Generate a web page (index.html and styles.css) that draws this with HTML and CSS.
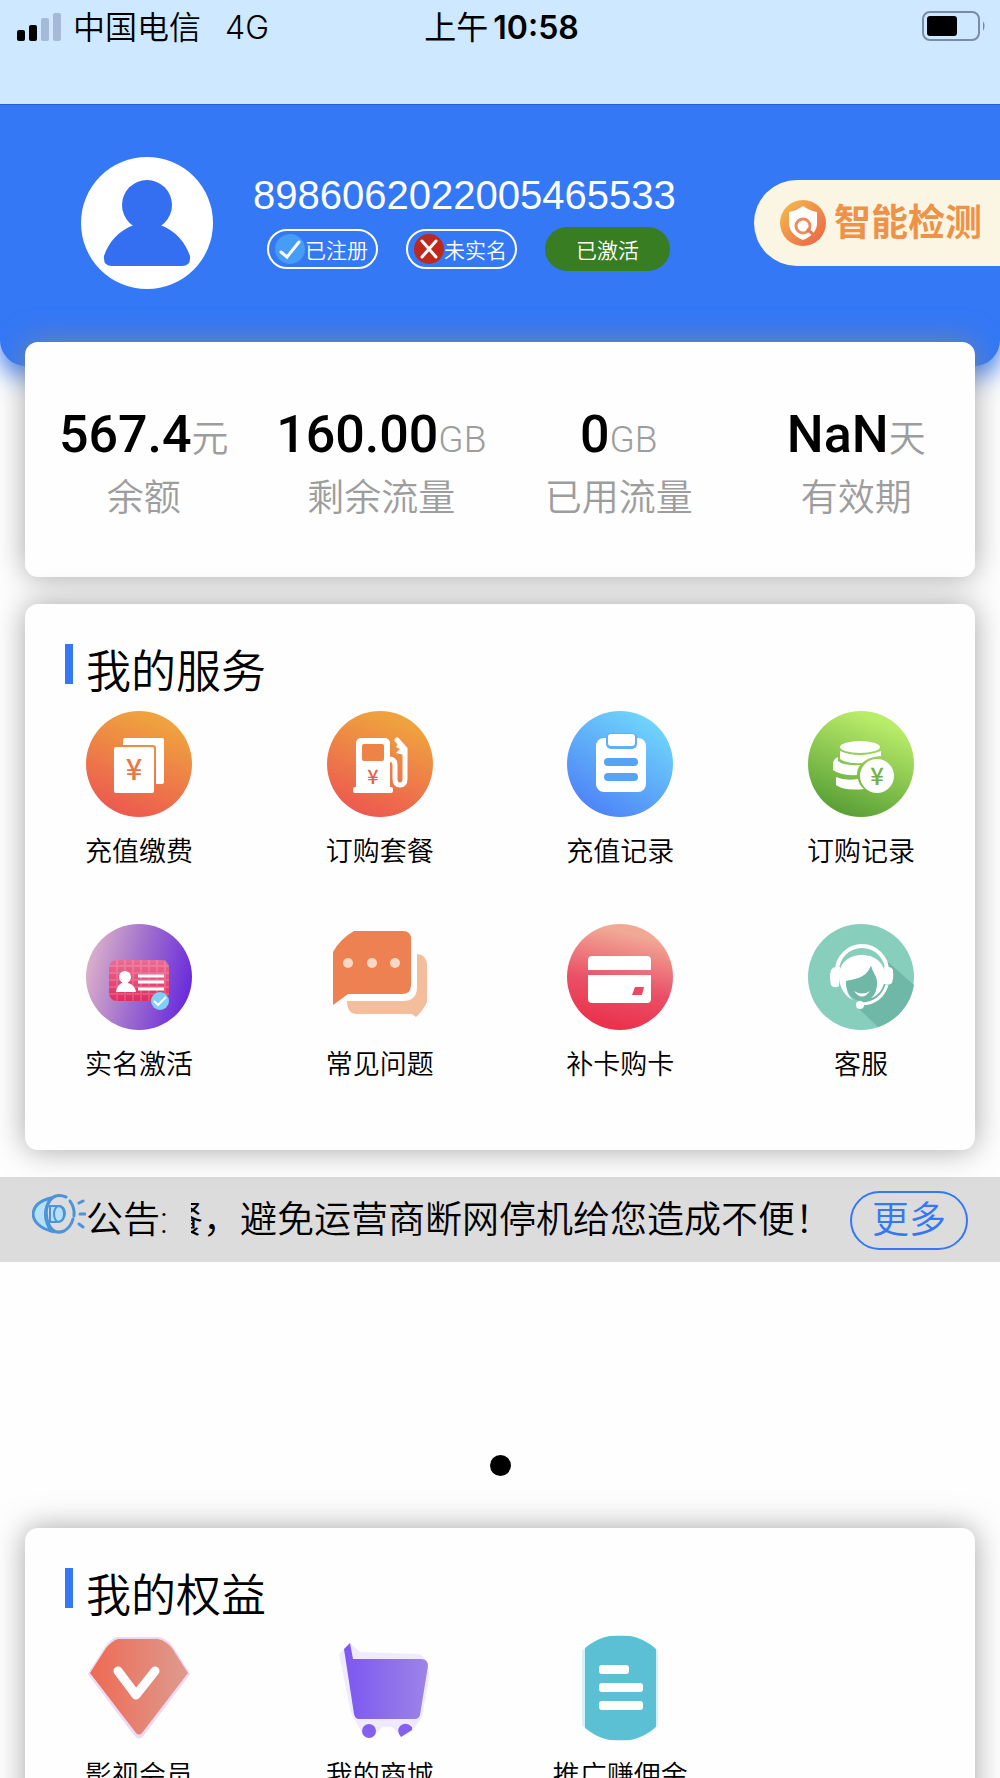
FILE: index.html
```html
<!DOCTYPE html>
<html lang="zh-CN">
<head>
    <meta charset="UTF-8">
    <meta name="viewport" content="width=device-width, initial-scale=1.0">
    <title>我的服务</title>
    <link rel="stylesheet" href="styles.css">
</head>
<body>
    <div class="page">
        <div class="status-bar">
            <div class="status-left">
                <svg class="signal" viewBox="0 0 44 28" aria-hidden="true">
                    <rect x="0" y="17" width="8" height="11" rx="2"/>
                    <rect x="12" y="12" width="8" height="16" rx="2"/>
                    <rect x="24" y="5" width="8" height="23" rx="2" fill="#a5b9d8"/>
                    <rect x="36" y="0" width="8" height="28" rx="2" fill="#a5b9d8"/>
                </svg>
                <span class="carrier">中国电信</span>
                <span class="network">4G</span>
            </div>
            <div class="status-time">上午<b>10:58</b></div>
            <div class="status-right">
                <svg class="battery" viewBox="0 0 64 30" aria-hidden="true">
                    <rect x="1" y="1" width="56" height="28" rx="7" fill="none" stroke="#7a8ba3" stroke-width="2"/>
                    <rect x="5" y="5" width="30" height="20" rx="3"/>
                    <path d="M61 10q3 5 0 10z" fill="#7a8ba3"/>
                </svg>
            </div>
        </div>

        <header class="header">
            <svg class="avatar" viewBox="0 0 132 132" aria-hidden="true">
                <circle cx="66" cy="66" r="66" fill="#fff"/>
                <circle cx="66" cy="48" r="25" fill="#336ff0"/>
                <path d="M53 68Q66 76 79 68C94 73 105 86 109 99Q110 109 101 109H31Q22 109 23 99C27 86 38 73 53 68z" fill="#336ff0"/>
            </svg>
            <div class="account">
                <div class="iccid">8986062022005465533</div>
                <div class="badges">
                    <span class="badge">
                        <svg viewBox="0 0 30 30" aria-hidden="true">
                            <circle cx="15" cy="15" r="15" fill="#469df6"/>
                            <path d="M6 18l6 5L24 8" fill="none" stroke="#fff" stroke-width="3" stroke-linecap="round"/>
                        </svg>已注册
                    </span>
                    <span class="badge">
                        <svg viewBox="0 0 30 30" aria-hidden="true">
                            <circle cx="15" cy="15" r="15" fill="#bf281d"/>
                            <path d="M8 7l14 16M22 7L8 23" fill="none" stroke="#fff" stroke-width="3" stroke-linecap="round"/>
                        </svg>未实名
                    </span>
                    <span class="badge badge-active">已激活</span>
                </div>
            </div>
            <button class="detect" type="button">
                <svg viewBox="0 0 48 48" aria-hidden="true">
                    <defs>
                        <linearGradient id="detect" x1="0" y1="0" x2="1" y2="1">
                            <stop offset="0" stop-color="#f3c04e"/>
                            <stop offset="1" stop-color="#eb5f47"/>
                        </linearGradient>
                    </defs>
                    <circle cx="24" cy="24" r="23" fill="url(#detect)"/>
                    <path d="M24 7Q31 12 38 13V24Q38 35 24 41Q10 35 10 24V13Q17 12 24 7z" fill="#fff"/>
                    <circle cx="24" cy="27" r="7" fill="none" stroke="#ee8a5c" stroke-width="3"/>
                    <path d="M28 30l7 6" stroke="#ee7a55" stroke-width="3"/>
                </svg>
                <span>智能检测</span>
            </button>
        </header>

        <section class="card stats">
            <div class="stat">
                <div class="stat-value">567.4<small>元</small></div>
                <div class="stat-label">余额</div>
            </div>
            <div class="stat">
                <div class="stat-value">160.00<small>GB</small></div>
                <div class="stat-label">剩余流量</div>
            </div>
            <div class="stat">
                <div class="stat-value">0<small>GB</small></div>
                <div class="stat-label">已用流量</div>
            </div>
            <div class="stat">
                <div class="stat-value">NaN<small>天</small></div>
                <div class="stat-label">有效期</div>
            </div>
        </section>

        <section class="card panel">
            <h2>我的服务</h2>
            <nav class="grid">
                <a class="item" href="#recharge">
                    <svg viewBox="0 0 106 106" aria-hidden="true">
                        <defs>
                            <linearGradient id="orange" x1="0.7" y1="0.1" x2="0.35" y2="1">
                                <stop offset="0" stop-color="#efa23f"/>
                                <stop offset="1" stop-color="#ec5850"/>
                            </linearGradient>
                        </defs>
                        <circle cx="53" cy="53" r="53" fill="url(#orange)"/>
                        <path d="M39 27H76Q78 27 78 29V71Q78 73 76 73H70V37Q70 34 67 34H37V29Q37 27 39 27z" fill="#fff"/>
                        <rect x="28" y="36" width="40" height="46" rx="2" fill="#fff"/>
                        <text class="yuan" x="48" y="69" font-size="29" fill="#ec7648">¥</text>
                    </svg>
                    <span>充值缴费</span>
                </a>
                <a class="item" href="#plans">
                    <svg viewBox="0 0 106 106" aria-hidden="true">
                        <circle cx="53" cy="53" r="53" fill="url(#orange)"/>
                        <rect x="29" y="27" width="34" height="54" rx="5" fill="#fff"/>
                        <rect x="26" y="76" width="40" height="6" rx="2" fill="#fff"/>
                        <rect x="35" y="33" width="22" height="17" rx="2" fill="#ed8346"/>
                        <path d="M62 48Q68 48 68 54V68Q68 74 73 74Q78 74 78 68V38L70 29" fill="none" stroke="#fff" stroke-width="5" stroke-linecap="round"/>
                        <path d="M72 31l-3 5 4 2-4 4 8 2V34z" fill="#fff"/>
                        <text class="yuan" x="46" y="73" font-size="20" fill="#ec5f4d">¥</text>
                    </svg>
                    <span>订购套餐</span>
                </a>
                <a class="item" href="#recharge-log">
                    <svg viewBox="0 0 106 106" aria-hidden="true">
                        <defs>
                            <linearGradient id="blue" x1="0.8" y1="0.1" x2="0.25" y2="0.95">
                                <stop offset="0" stop-color="#6fd4fb"/>
                                <stop offset="1" stop-color="#4e84f7"/>
                            </linearGradient>
                        </defs>
                        <circle cx="53" cy="53" r="53" fill="url(#blue)"/>
                        <rect x="29" y="27" width="50" height="54" rx="8" fill="#fff"/>
                        <rect x="39" y="22" width="31" height="16" rx="5" fill="#5fb0f8"/>
                        <rect x="41" y="23" width="27" height="12" rx="3" fill="#fff"/>
                        <rect x="37" y="47" width="34" height="8" rx="4" fill="#57a3f5"/>
                        <rect x="37" y="62" width="34" height="8" rx="4" fill="#57a3f5"/>
                    </svg>
                    <span>充值记录</span>
                </a>
                <a class="item" href="#order-log">
                    <svg viewBox="0 0 106 106" aria-hidden="true">
                        <defs>
                            <linearGradient id="green" x1="0.7" y1="0.1" x2="0.35" y2="0.95">
                                <stop offset="0" stop-color="#b9ec69"/>
                                <stop offset="1" stop-color="#5ca238"/>
                            </linearGradient>
                        </defs>
                        <circle cx="53" cy="53" r="53" fill="url(#green)"/>
                        <g fill="#fff">
                            <ellipse cx="52" cy="36" rx="20" ry="6"/>
                            <path d="M32 40Q51 48 73 40V45Q60 46 54 52Q38 53 32 48z"/>
                            <path d="M30 46Q25 48 25 53V59Q33 65 49 64Q49 58 52 54Q36 55 30 50z"/>
                            <path d="M28 66Q37 70 50 68Q51 74 56 78Q36 80 28 74z"/>
                            <circle cx="69" cy="65" r="17"/>
                        </g>
                        <text class="yuan" x="69" y="74" font-size="24" fill="#70b145">¥</text>
                    </svg>
                    <span>订购记录</span>
                </a>
                <a class="item" href="#verify">
                    <svg viewBox="0 0 106 106" aria-hidden="true">
                        <defs>
                            <linearGradient id="violet" x1="0.05" y1="0.3" x2="1" y2="0.55">
                                <stop offset="0" stop-color="#d8adc9"/>
                                <stop offset="0.5" stop-color="#9c6bce"/>
                                <stop offset="1" stop-color="#6a2bdc"/>
                            </linearGradient>
                            <linearGradient id="rose" x1="0" y1="0" x2="0" y2="1">
                                <stop offset="0" stop-color="#ea6c93"/>
                                <stop offset="1" stop-color="#e02c5f"/>
                            </linearGradient>
                        </defs>
                        <circle cx="53" cy="53" r="53" fill="url(#violet)"/>
                        <rect x="23" y="36" width="60" height="41" rx="8" fill="url(#rose)"/>
                        <path d="M31 36V77M39 36V77M47 36V77M55 36V77M63 36V77M71 36V77M79 36V70M23 42H83M23 49H83M23 56H83M23 63H83M23 70H83" stroke="#fff" stroke-opacity="0.15" stroke-width="2"/>
                        <circle cx="39" cy="53" r="6" fill="#fff"/>
                        <path d="M36 56h6v3q7 2 8 9H30q1-7 6-9z" fill="#fff"/>
                        <path d="M52 52H78M52 58H78M52 65H78" stroke="#fff" stroke-width="3"/>
                        <circle cx="74" cy="77" r="9" fill="#80cff7"/>
                        <path d="M68 77l4 4 8-8" fill="none" stroke="#fff" stroke-width="2"/>
                    </svg>
                    <span>实名激活</span>
                </a>
                <a class="item" href="#faq">
                    <svg viewBox="0 0 106 106" aria-hidden="true">
                        <path d="M27 7H76Q84 7 84 15V61Q84 70 75 70H21L6 81V28Q13 15 27 7z" fill="#ed8151"/>
                        <path d="M90 30Q100 31 100 41V78Q96 87 89 93L85 90H30Q20 90 20 77H76Q90 77 90 63z" fill="#f4bd9b"/>
                        <g fill="#f9d9c5">
                            <circle cx="21" cy="39" r="5"/>
                            <circle cx="45" cy="39" r="5"/>
                            <circle cx="68" cy="39" r="5"/>
                        </g>
                    </svg>
                    <span>常见问题</span>
                </a>
                <a class="item" href="#card">
                    <svg viewBox="0 0 106 106" aria-hidden="true">
                        <defs>
                            <linearGradient id="red" x1="0.65" y1="0.1" x2="0.45" y2="1">
                                <stop offset="0" stop-color="#f1a995"/>
                                <stop offset="0.55" stop-color="#ea5068"/>
                                <stop offset="1" stop-color="#ea304a"/>
                            </linearGradient>
                        </defs>
                        <circle cx="53" cy="53" r="53" fill="url(#red)"/>
                        <path d="M25 32H80Q84 32 84 36V46H21V36Q21 32 25 32zM21 51H84V75Q84 79 80 79H25Q21 79 21 75z" fill="#fff"/>
                        <path d="M68 63H77L75 71H65z" fill="#e94a63"/>
                    </svg>
                    <span>补卡购卡</span>
                </a>
                <a class="item" href="#support">
                    <svg viewBox="0 0 106 106" aria-hidden="true">
                        <circle cx="53" cy="53" r="53" fill="#88cebd"/>
                        <path d="M80 38L106 61A53 53 0 0 1 70 103L50 84z" fill="#6fb7a7"/>
                        <path d="M29 47A25 25 0 0 1 79 47" fill="none" stroke="#fff" stroke-width="4"/>
                        <path d="M32 43Q26 42 23 46Q21 53 23 61Q26 65 31 62zM76 43Q83 42 85 46Q86 53 84 59Q81 62 76 60z" fill="#fff"/>
                        <path d="M54 31C39 31 31 41 31 52C31 64 38 73 45 76C39 71 38 64 38 57C48 55 58 54 63 42C65 50 69 51 69 60C68 68 67 71 63 74C71 72 77 63 77 52C77 40 68 31 54 31z" fill="#fff"/>
                        <path d="M38 57C48 55 58 54 63 42C65 50 69 51 69 60C68 70 62 76 54 77C44 77 38 68 38 57z" fill="#6fb7a7"/>
                        <path d="M46 67Q54 72 62 67Q54 78 46 67z" fill="#fff"/>
                        <path d="M79 61Q73 79 54 80" fill="none" stroke="#fff" stroke-width="3"/>
                        <circle cx="52" cy="81" r="4" fill="#fff"/>
                    </svg>
                    <span>客服</span>
                </a>
            </nav>
        </section>

        <div class="notice">
            <svg class="notice-icon" viewBox="0 0 54 40" aria-hidden="true">
                <g fill="none" stroke="#4c93d9" stroke-width="3" stroke-linecap="round">
                    <path d="M19 4Q2 8 1 20Q2 32 19 37Q8 20 19 4z" fill="#b5e0fa"/>
                    <path d="M34 3Q21-2 16 10Q12 20 17 31Q22 41 32 37Q39 33 41 25"/>
                    <path d="M38 7Q43 14 42 22"/>
                    <path d="M18 12V28H24Q32 28 33 20Q33 12 26 12z" fill="#b5e0fa" stroke-width="2"/>
                    <ellipse cx="27" cy="20" rx="5" ry="8" stroke-width="2"/>
                    <path d="M47 9l4-2M48 20h5M47 30l4 3"/>
                </g>
            </svg>
            <span>公告:</span>
            <div class="marquee"><span>餐，避免运营商断网停机给您造成不便！</span></div>
            <button class="more" type="button">更多</button>
        </div>

        <div class="banner">
            <button class="dot" type="button" aria-label="1"></button>
        </div>

        <section class="card panel">
            <h2>我的权益</h2>
            <nav class="grid">
                <a class="item" href="#vip">
                    <svg viewBox="0 0 106 106" aria-hidden="true">
                        <defs>
                            <linearGradient id="coral" x1="0" y1="0" x2="1" y2="0">
                                <stop offset="0" stop-color="#ee6a54"/>
                                <stop offset="1" stop-color="#de9b8e"/>
                            </linearGradient>
                        </defs>
                        <path d="M31 3H73Q81 5 86 12L103 39L57 100Q53 105 49 100L3 39L20 12Q25 5 31 3z" fill="#eed9f5" stroke="#eed9f5" stroke-width="2"/>
                        <path d="M32 4H72Q80 6 86 13L102 38L56 98Q53 101 50 98L4 38L20 13Q26 6 32 4z" fill="url(#coral)"/>
                        <path d="M32 36L50 60L69 36" fill="none" stroke="#fff" stroke-width="9" stroke-linecap="round" stroke-linejoin="round"/>
                    </svg>
                    <span>影视会员</span>
                </a>
                <a class="item" href="#mall">
                    <svg viewBox="0 0 106 106" aria-hidden="true">
                        <defs>
                            <linearGradient id="purple" x1="0" y1="0" x2="1" y2="0">
                                <stop offset="0" stop-color="#7c57f0"/>
                                <stop offset="1" stop-color="#9c84e8"/>
                            </linearGradient>
                        </defs>
                        <path d="M12 19L23 8L33 17L92 19Q103 24 102 45L95 82L86 95L75 102L65 92H56L45 102L35 98L24 78z" fill="#f0ebfc"/>
                        <path d="M17 14L23 8L26 24H94Q101 24 101 31L93 80Q92 84 88 84H32Q28 84 27 79z" fill="url(#purple)"/>
                        <circle cx="42" cy="96" r="7" fill="#8560ed"/>
                        <path d="M85 95L74 102Q69 96 73 91Q79 86 85 92z" fill="#8560ed"/>
                    </svg>
                    <span>我的商城</span>
                </a>
                <a class="item" href="#promote">
                    <svg viewBox="0 0 106 106" aria-hidden="true">
                        <defs>
                            <clipPath id="round"><circle cx="53" cy="53" r="53"/></clipPath>
                        </defs>
                        <g clip-path="url(#round)">
                            <rect x="15" y="0" width="76" height="106" fill="#d5f0f6"/>
                            <rect x="18" y="1" width="71" height="104" fill="#5cc0d5"/>
                        </g>
                        <rect x="32" y="30" width="30" height="9" rx="3" fill="#fff"/>
                        <rect x="32" y="48" width="44" height="9" rx="3" fill="#fff"/>
                        <rect x="32" y="66" width="44" height="9" rx="3" fill="#fff"/>
                    </svg>
                    <span>推广赚佣金</span>
                </a>
            </nav>
        </section>
    </div>
</body>
</html>
```

FILE: styles.css
```css
* {
    box-sizing: border-box;
}
body {
    margin: 0;
    font-family: Roboto, "Noto Sans CJK SC", sans-serif;
    font-weight: 350;
    color: #000;
    background-color: #fefefe;
}
button {
    font-family: inherit;
    cursor: pointer;
}
svg {
    display: block;
    flex-shrink: 0;
}
.page {
    height: 100vh;
    overflow-y: auto;
    overflow-x: hidden;
    scrollbar-width: none;
}

/* Status bar */
.status-bar {
    position: relative;
    z-index: 1;
    display: grid;
    grid-template-columns: 1fr auto 1fr;
    align-items: start;
    height: 105px;
    padding: 7px 14px 0 17px;
    font-size: 32px;
    line-height: 42px;
    background-color: #cee9ff;
    border-bottom: 1px solid #2a5fc4;
}
.status-left {
    display: flex;
    align-items: center;
}
.signal {
    width: 44px;
    height: 28px;
    margin-bottom: 2px;
}
.carrier {
    margin: 0 24px 0 12px;
}
.network {
    font-family: Inter, sans-serif;
    font-size: 32px;
}
.status-time {
    display: flex;
    align-items: center;
    gap: 5px;
    font-weight: 400;
}
.status-time b {
    font-family: Inter, sans-serif;
    font-weight: 600;
}
.status-right {
    display: flex;
    justify-content: flex-end;
    padding-top: 4px;
}
.battery {
    width: 64px;
    height: 30px;
}

/* Header */
.header {
    display: flex;
    align-items: flex-start;
    height: 261px;
    padding: 52px 0 0 81px;
    background-color: #3478f6;
    border-radius: 0 0 26px 26px;
    box-shadow: 0 10px 26px #3478f6;
    color: #fff;
}
.avatar {
    width: 132px;
    height: 132px;
}
.account {
    margin: 14px 0 0 40px;
}
.iccid {
    font-family: "Liberation Sans", Arial, sans-serif;
    font-size: 40px;
    line-height: 48px;
}
.badges {
    display: flex;
    align-items: center;
    gap: 28px;
    margin: 8px 0 0 14px;
}
.badge {
    display: flex;
    align-items: center;
    height: 40px;
    padding: 0 8px 0 6px;
    border: 2px solid #fff;
    border-radius: 20px;
    font-size: 21px;
    white-space: nowrap;
}
.badge svg {
    width: 30px;
    height: 30px;
}
.badge-active {
    height: 44px;
    padding: 0 31px;
    border: 0;
    border-radius: 22px;
    background-color: #387d21;
}
.detect {
    display: flex;
    align-items: center;
    gap: 7px;
    height: 86px;
    margin: 23px 0 0 auto;
    padding: 0 18px 0 25px;
    border: 0;
    border-radius: 43px 0 0 43px;
    background-color: #fbf6e3;
    color: #ef9249;
    font-size: 37px;
    font-weight: 700;
    white-space: nowrap;
}
.detect svg {
    width: 48px;
    height: 48px;
}
.detect span {
    padding-bottom: 6px;
}

/* Cards */
.card {
    position: relative;
    margin: 0 25px 27px;
    border-radius: 13px;
    background-color: #fefefe;
    box-shadow: 0 0 30px rgba(136, 136, 136, 0.75);
}
.stats {
    display: flex;
    margin-top: -24px;
    padding: 59px 0 53px;
}
.stat {
    flex: 1;
    text-align: center;
    white-space: nowrap;
}
.stat-value {
    font-size: 52px;
    font-weight: 500;
    line-height: 68px;
}
.stat-value small {
    font-size: 37px;
    font-weight: 350;
    line-height: 1;
    color: #9d9d9d;
}
.stat-label {
    margin-top: 4px;
    font-size: 37px;
    line-height: 51px;
    color: #9d9d9d;
}
.panel {
    padding: 40px 61px 65px;
}
.panel h2 {
    display: flex;
    gap: 13px;
    margin: 0 -21px;
    font-size: 45px;
    font-weight: 350;
    line-height: 58px;
}
.panel h2::before {
    content: "";
    width: 8px;
    height: 40px;
    background-color: #3478f6;
}
.grid {
    display: grid;
    grid-template-columns: repeat(4, 106px);
    justify-content: space-between;
    row-gap: 52px;
    margin-top: 9px;
}
.item {
    display: flex;
    flex-direction: column;
    align-items: center;
    gap: 15px;
    color: #000;
    font-size: 27px;
    line-height: 40px;
    text-decoration: none;
    white-space: nowrap;
}
.item span {
    margin: 0 -20px;
}
.item svg {
    width: 106px;
    height: 106px;
}
.yuan {
    font-family: "Noto Sans CJK SC", sans-serif;
    font-weight: 500;
    text-anchor: middle;
}

/* Notice */
.notice {
    display: flex;
    align-items: center;
    height: 85px;
    padding: 2px 32px 0;
    background-color: #dcdcdc;
    font-size: 37px;
    line-height: 54px;
}
.notice-icon {
    width: 54px;
    height: 40px;
    margin-bottom: 14px;
}
.marquee {
    display: flex;
    flex: 1;
    justify-content: flex-end;
    margin: 0 18px 0 23px;
    overflow: hidden;
    white-space: nowrap;
}
.more {
    height: 59px;
    padding: 0 20px;
    border: 2px solid #3478f6;
    border-radius: 30px;
    background: none;
    color: #3478f6;
    font-size: 37px;
    font-weight: 350;
    line-height: 54px;
}
.banner {
    display: flex;
    justify-content: center;
    align-items: flex-end;
    height: 266px;
    padding-bottom: 52px;
}
.dot {
    width: 21px;
    height: 21px;
    padding: 0;
    border: 0;
    border-radius: 50%;
    background-color: #000;
}
```
